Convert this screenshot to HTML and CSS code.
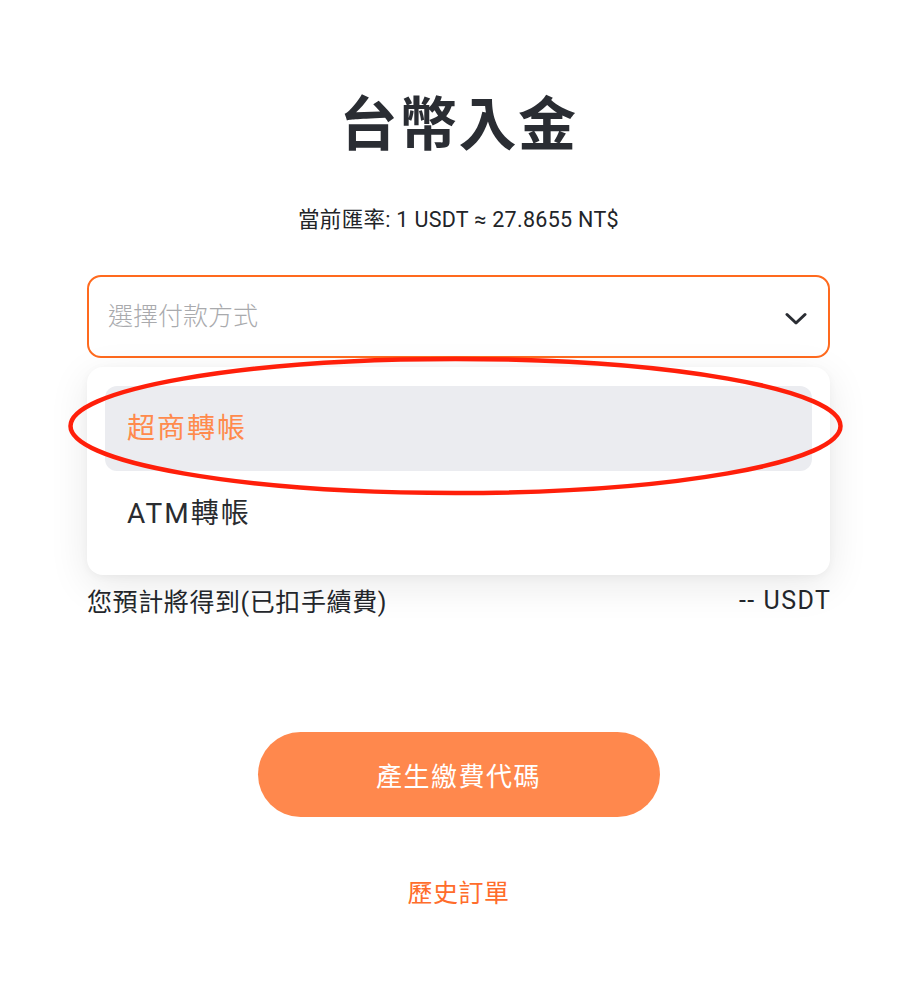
FILE: index.html
```html
<!DOCTYPE html>
<html lang="zh-Hant">
<head>
<meta charset="utf-8">
<title>台幣入金</title>
<link rel="stylesheet" href="styles.css">
</head>
<body>
<main class="page">
  <h1 class="title">台幣入金</h1>
  <p class="rate">當前匯率: 1 USDT ≈ 27.8655 NT$</p>
  <div class="select-wrap">
    <div class="select">
      <span class="placeholder">選擇付款方式</span>
      <svg class="chevron" width="22" height="14" viewBox="0 0 22 14"><path d="M2 2.5 L11 11 L20 2.5" fill="none" stroke="#2a2d33" stroke-width="3" stroke-linecap="round" stroke-linejoin="round"/></svg>
    </div>
    <ul class="menu">
      <li class="option active">超商轉帳</li>
      <li class="option">ATM轉帳</li>
    </ul>
  </div>
  <div class="spacer"></div>
  <div class="receive">
    <span>您預計將得到(已扣手續費)</span>
    <span class="amount">-- USDT</span>
  </div>
  <div class="actions">
    <button class="primary">產生繳費代碼</button>
    <a class="history">歷史訂單</a>
  </div>
</main>
<svg class="annotation" width="909" height="995" viewBox="0 0 909 995">
  <ellipse cx="455.5" cy="426" rx="385" ry="67" fill="none" stroke="#ff1f0a" stroke-width="4.5"/>
</svg>
</body>
</html>
```
FILE: styles.css
```css
* { box-sizing: border-box; }
html, body { margin: 0; padding: 0; background: #ffffff; }
body {
  font-family: Roboto, "Noto Sans CJK TC", "Noto Sans", sans-serif;
  color: #24272c;
  position: relative;
  width: 909px;
  min-height: 995px;
  overflow: hidden;
}
.page {
  width: 743px;
  margin-left: 87px;
  padding-top: 80px;
  display: flex;
  flex-direction: column;
}
.title {
  margin: 0;
  text-align: center;
  font-family: "Noto Sans CJK TC", sans-serif;
  font-size: 58px;
  line-height: 81px;
  font-weight: 700;
  letter-spacing: 1.5px;
  color: #2a2d33;
}
.rate {
  margin: 45px 0 0;
  text-align: center;
  font-size: 21.5px;
  line-height: 28px;
  letter-spacing: 0.3px;
  color: #222428;
}
.select-wrap {
  position: relative;
  margin-top: 41px;
}
.select {
  height: 83px;
  border: 2px solid #ff6a1e;
  border-radius: 14px;
  display: flex;
  align-items: center;
  justify-content: space-between;
  padding: 0 21px 0 19px;
  background: #fff;
}
.placeholder {
  font-family: "Noto Sans CJK TC", sans-serif;
  font-size: 25px;
  font-weight: 300;
  color: #a9aaad;
  margin-top: -6px;
}
.chevron { display: block; margin-top: 4px; }
.menu {
  position: absolute;
  left: 0;
  right: 0;
  top: 92px;
  height: 208px;
  margin: 0;
  padding: 19px 18px;
  list-style: none;
  background: #fff;
  border-radius: 16px;
  box-shadow: 0 10px 40px rgba(0, 0, 0, 0.09), 0 2px 8px rgba(0, 0, 0, 0.04);
  z-index: 2;
}
.option {
  height: 85px;
  display: flex;
  align-items: center;
  padding: 0 0 5px 22px;
  border-radius: 12px;
  font-size: 28px;
  letter-spacing: 2px;
  color: #2a2c30;
}
.option.active {
  background: #ebecf0;
  color: #ff8a4c;
}
.spacer { height: 226px; }
.receive {
  display: flex;
  justify-content: space-between;
  align-items: center;
  height: 32px;
  font-size: 25px;
  letter-spacing: 0.6px;
  color: #24272c;
}
.amount { letter-spacing: 1.5px; margin-right: -1.5px; }
.actions {
  display: flex;
  flex-direction: column;
  align-items: center;
  margin-top: 116px;
}
.primary {
  width: 402px;
  height: 85px;
  border: none;
  border-radius: 43px;
  background: #ff884d;
  color: #fff;
  font-family: "Noto Sans CJK TC", sans-serif;
  font-size: 26px;
  letter-spacing: 1.5px;
}
.history {
  margin-top: 58px;
  font-family: "Noto Sans CJK TC", sans-serif;
  font-size: 25px;
  line-height: 32px;
  letter-spacing: 0.5px;
  color: #ff6d2b;
}
.annotation {
  position: absolute;
  left: 0;
  top: 0;
  pointer-events: none;
  z-index: 5;
}
```
